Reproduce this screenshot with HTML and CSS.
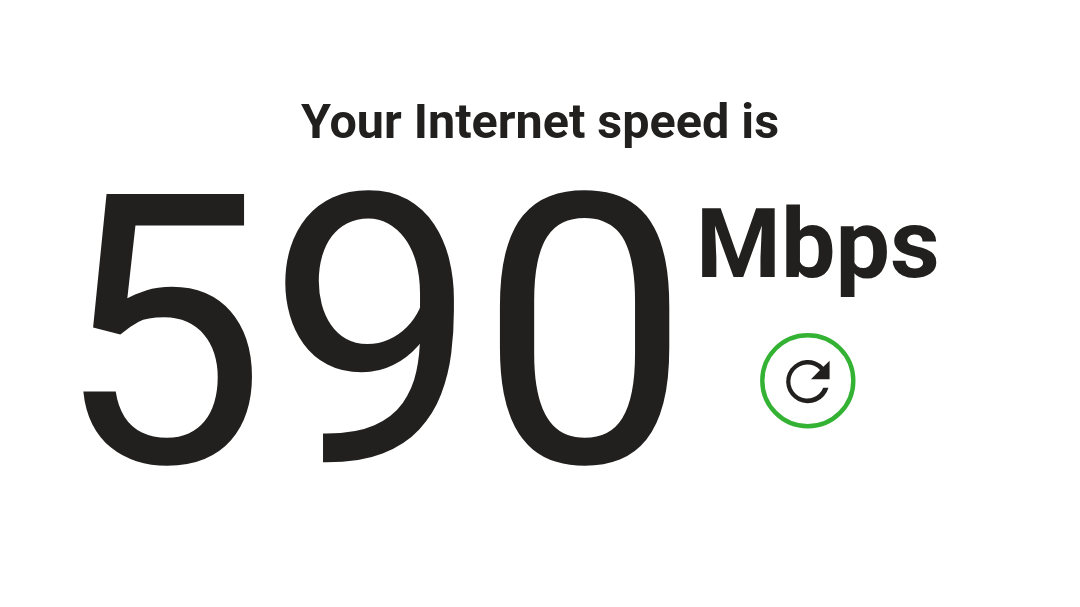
FILE: index.html
```html
<!DOCTYPE html>
<html lang="en">
<head>
  <meta charset="utf-8">
  <title>Internet Speed Test</title>
  <link rel="stylesheet" href="styles.css">
</head>
<body>
  <main class="speed-test">
    <h1 class="title">Your Internet speed is</h1>
    <div class="result">
      <div class="speed-value">590</div>
      <div class="speed-side">
        <div class="speed-units">Mbps</div>
        <button class="retry" type="button" aria-label="Test again">
          <svg viewBox="0 0 96 96" width="96" height="96">
            <circle class="retry-ring" cx="47.8" cy="47.7" r="45.5"/>
            <path class="retry-arrow" d="M68.5 54.7A21.6 21.6 0 1 1 63.4 33.7L69.6 27.7V46.2H51L60 37.1A17 17 0 1 0 63.2 54.7Z"/>
          </svg>
        </button>
      </div>
    </div>
  </main>
</body>
</html>
```
FILE: styles.css
```css
body {
  margin: 0;
  background: #fff;
  color: #22201f;
  font-family: Roboto, sans-serif;
  overflow: hidden;
}
.title {
  margin: 94px 0 0;
  font-size: 48.5px;
  line-height: 56px;
  font-weight: 700;
  text-align: center;
}
.result {
  display: flex;
  align-items: flex-start;
}
.speed-value {
  margin-left: 55px;
  padding-top: 3px;
  width: 641px;
  font-size: 377px;
  line-height: 360px;
  font-weight: 400;
}
.speed-side {
  display: flex;
  flex-direction: column;
  padding-top: 38px;
}
.speed-units {
  font-size: 97px;
  line-height: 112px;
  font-weight: 700;
}
.retry {
  width: 96px;
  height: 96px;
  margin: 33px 0 0 64px;
  padding: 0;
  border: none;
  background: none;
  cursor: pointer;
}
.retry svg {
  display: block;
}
.retry-ring {
  fill: none;
  stroke: #34b233;
  stroke-width: 4.4;
}
.retry-arrow {
  fill: #22201f;
}
```
